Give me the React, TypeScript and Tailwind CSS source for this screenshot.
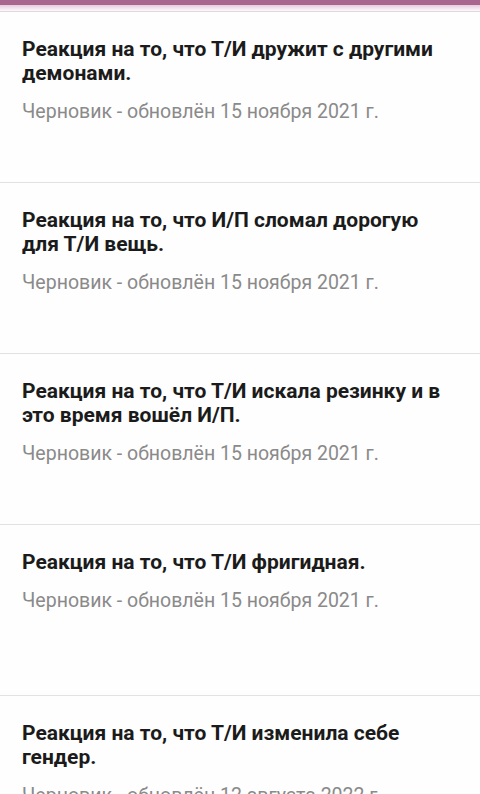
const drafts = [
  { title: "Реакция на то, что Т/И дружит с другими демонами.", date: "15 ноября 2021 г." },
  { title: "Реакция на то, что И/П сломал дорогую для Т/И вещь.", date: "15 ноября 2021 г." },
  { title: "Реакция на то, что Т/И искала резинку и в это время вошёл И/П.", date: "15 ноября 2021 г." },
  { title: "Реакция на то, что Т/И фригидная.", date: "15 ноября 2021 г." },
  { title: "Реакция на то, что Т/И изменила себе гендер.", date: "12 августа 2022 г." },
];

export default function App() {
  return (
    <div
      className="w-[480px] h-[794px] overflow-hidden bg-[#fefefe]"
      style={{ fontFamily: "Roboto, 'Noto Sans', sans-serif" }}
    >
      {/* top bar + its shadow */}
      <div className="h-[5px] bg-[#a8668f]" />
      <div className="h-[6px] bg-gradient-to-b from-[#e6cbdc] to-[#fdf8fb]" />
      <div className="h-px bg-[#dcdcdc]" />

      <ul>
        {drafts.map((d, i) => (
          <li
            key={i}
            className="h-[171px] shrink-0 border-b border-[#e2e2e2] pl-[22px] pr-[28px] pt-[25px]"
          >
            <div className="text-[21px] leading-[24px] font-bold text-[#1b1b1b]">
              {d.title}
            </div>
            <div className="mt-[15px] text-[19.5px] leading-[24px] text-[#8a8a8a]">
              Черновик - обновлён {d.date}
            </div>
          </li>
        ))}
      </ul>
    </div>
  );
}
